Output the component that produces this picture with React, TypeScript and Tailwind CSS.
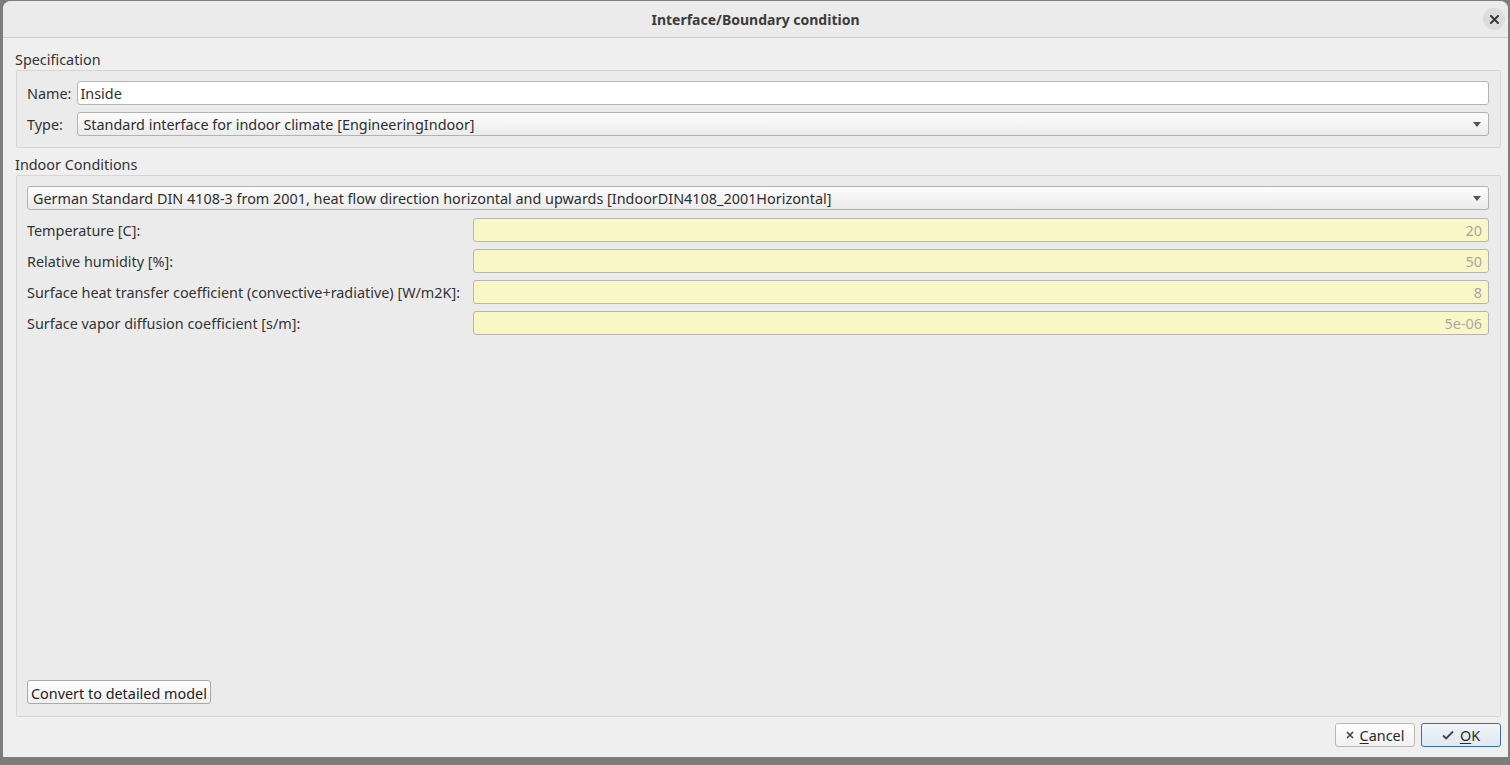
import React from 'react'

const font = { fontFamily: '"Noto Sans", "Open Sans", sans-serif' }

function Arrow() {
  return (
    <svg width="8" height="5" viewBox="0 0 8 5" className="shrink-0">
      <path d="M0 0 L8 0 L4 5 Z" fill="#555555" />
    </svg>
  )
}

function Combo({ text }: { text: string }) {
  return (
    <div className="h-[24px] flex items-center justify-between pl-[5px] pr-[7px] rounded-[3px] border border-[#b2b2b2] bg-gradient-to-b from-[#fdfdfd] to-[#ebebeb] text-[#2e2e2e]">
      <span className="whitespace-nowrap pt-[2px]">{text}</span>
      <Arrow />
    </div>
  )
}

function ValueField({ value }: { value: string }) {
  return (
    <div className="h-[24px] flex items-center justify-end px-[6px] pt-[2px] rounded-[3px] border border-[#b5b5b5] bg-[#f9f7c6] text-[#a8a8a8]">
      {value}
    </div>
  )
}

const rows = [
  { label: 'Temperature [C]:', value: '20' },
  { label: 'Relative humidity [%]:', value: '50' },
  { label: 'Surface heat transfer coefficient (convective+radiative) [W/m2K]:', value: '8' },
  { label: 'Surface vapor diffusion coefficient [s/m]:', value: '5e-06' },
]

export default function App() {
  return (
    <div className="w-[1510px] h-[765px] bg-[#7d7d7d] pt-px overflow-hidden text-[14.4px]" style={font}>
      <div className="ml-[3px] w-[1505px] h-[756px] rounded-t-[8px] bg-[#efefef] flex flex-col overflow-hidden">
        {/* title bar */}
        <div className="h-[37px] shrink-0 border-b border-[#cdcdcd] bg-[#ebebeb] relative flex items-center justify-center">
          <span className="font-bold text-[#3c3c3c] text-[14px]">Interface/Boundary condition</span>
          <div className="absolute right-[3px] top-[7px] w-[22px] h-[22px] rounded-full bg-[#dcdcdc] flex items-center justify-center">
            <svg width="9" height="9" viewBox="0 0 9 9">
              <path d="M1 1 L8 8 M8 1 L1 8" stroke="#3a3a3a" strokeWidth="2" strokeLinecap="square" />
            </svg>
          </div>
        </div>

        <div className="flex-1 flex flex-col pl-[13px] pr-[7px]">
          {/* Specification */}
          <div className="mt-[10px] h-[22px] leading-[24px] text-[#333333] -ml-px">Specification</div>
          <div className="border border-[#d6d6d6] bg-[#ebebeb] rounded-[2px] pt-[10px] pb-[11px] pl-[10px] pr-[11px] grid grid-cols-[auto_1fr] gap-x-[6px] gap-y-[7px] items-center text-[#333333]">
            <span className="pt-[2px]">Name:</span>
            <div className="h-[24px] flex items-center px-[2px] pt-[2px] rounded-[3px] border border-[#b5b5b5] bg-white text-[#2e2e2e]">Inside</div>
            <span className="pt-[2px]">Type:</span>
            <Combo text="Standard interface for indoor climate [EngineeringIndoor]" />
          </div>

          {/* Indoor conditions */}
          <div className="mt-[5px] h-[22px] leading-[24px] text-[#333333] -ml-px">Indoor Conditions</div>
          <div className="flex-1 border border-[#d6d6d6] bg-[#ebebeb] rounded-[2px] pt-[10px] pb-[11px] pl-[10px] pr-[11px] flex flex-col text-[#333333]">
            <Combo text="German Standard DIN 4108-3 from 2001, heat flow direction horizontal and upwards [IndoorDIN4108_2001Horizontal]" />
            <div className="mt-[8px] grid grid-cols-[440px_1fr] auto-rows-[24px] gap-x-[6px] gap-y-[7px] items-center">
              {rows.map(r => (
                <React.Fragment key={r.label}>
                  <span className="whitespace-nowrap pt-[2px] leading-[20px]">{r.label}</span>
                  <ValueField value={r.value} />
                </React.Fragment>
              ))}
            </div>
            <div className="flex-1" />
            <div>
              <button className="h-[24px] px-[3px] pt-[2px] rounded-[3px] border border-[#a9a9a9] bg-gradient-to-b from-[#ffffff] to-[#f0f0f0] text-[#222222]">
                Convert to detailed model
              </button>
            </div>
          </div>

          {/* footer */}
          <div className="h-[40px] shrink-0 flex items-start justify-end gap-[6px] pt-[6px] -mr-[2px] pr-[2px]">
            <button className="w-[80px] h-[24px] flex items-center justify-center gap-[6px] rounded-[3px] border border-[#b8b8b8] bg-gradient-to-b from-[#ffffff] to-[#f1f1f1] text-[#2a2a2a]">
              <svg width="8" height="8" viewBox="0 0 8 8">
                <path d="M1 1 L7 7 M7 1 L1 7" stroke="#444444" strokeWidth="1.6" />
              </svg>
              <span className="pt-[2px]"><span className="underline underline-offset-2">C</span>ancel</span>
            </button>
            <button className="w-[80px] h-[24px] flex items-center justify-center gap-[6px] rounded-[3px] border border-[#3d6f9c] bg-gradient-to-b from-[#eef4f9] to-[#dfe8f0] text-[#2a2a2a]">
              <svg width="12" height="10" viewBox="0 0 12 10">
                <path d="M1 5.5 L4.2 8.5 L11 1.5" stroke="#444444" strokeWidth="1.8" fill="none" />
              </svg>
              <span className="pt-[2px]"><span className="underline underline-offset-2">O</span>K</span>
            </button>
          </div>
        </div>
      </div>
    </div>
  )
}
